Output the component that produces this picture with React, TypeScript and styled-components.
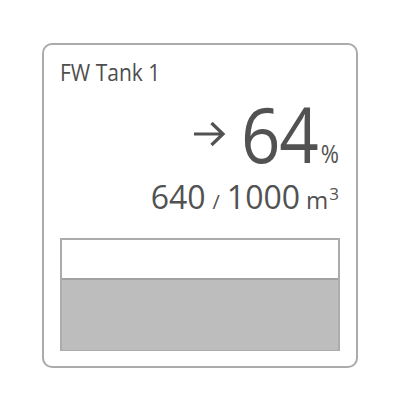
import styled, { createGlobalStyle } from 'styled-components';

const Global = createGlobalStyle`
  html, body {
    margin: 0;
    padding: 0;
    background: #ffffff;
  }
  body {
    font-family: "Open Sans", "Noto Sans", sans-serif;
    color: #525252;
  }
`;

const Page = styled.div`
  width: 400px;
  height: 410px;
  padding: 43px 42px;
  box-sizing: border-box;
`;

const Card = styled.div`
  width: 316px;
  height: 325px;
  box-sizing: border-box;
  border: 2px solid #ababab;
  border-radius: 10px;
  padding: 16px 16px 15px 16px;
  display: flex;
  flex-direction: column;
`;

const Title = styled.div`
  font-size: 21px;
  line-height: 24px;
  color: #4e4e4e;
  transform: scaleY(1.12);
  transform-origin: 50% 20px;
`;

const Level = styled.div`
  display: flex;
  justify-content: flex-end;
  align-items: center;
  margin-top: 16px;
  height: 70px;
`;

const Arrow = styled.svg`
  width: 33px;
  height: 26px;
  margin-right: 15px;
  margin-bottom: 5px;
`;

const Big = styled.span`
  font-size: 69px;
  line-height: 70px;
  letter-spacing: -1px;
  transform: scaleY(1.12);
  transform-origin: 50% 61px;
`;

const Percent = styled.span`
  font-size: 22px;
  line-height: 22px;
  align-self: flex-end;
  margin: 0 1px 6px 3px;
  transform: scaleY(1.12);
  transform-origin: 50% 100%;
`;

const Volume = styled.div`
  display: flex;
  justify-content: flex-end;
  align-items: baseline;
  margin-top: 8px;
  font-size: 32px;
  line-height: 36px;
`;

const Small = styled.span<{ $size: number; $left: number; $right: number }>`
  font-size: ${(p) => p.$size}px;
  margin: 0 ${(p) => p.$right}px 0 ${(p) => p.$left}px;
`;

const Sup = styled.sup`
  font-size: 17px;
  vertical-align: 9px;
  line-height: 0;
  margin-left: 1px;
`;

const Gauge = styled.div`
  margin-top: 18px;
  height: 118px;
  box-sizing: border-box;
  border: 2px solid #acacac;
  border-bottom-width: 1px;
  display: flex;
  flex-direction: column;
  justify-content: flex-end;
  background: #ffffff;
`;

const Fill = styled.div`
  background: #bdbdbd;
  border-top: 2px solid #a2a2a2;
`;

export default function App() {
  const level = 64;
  return (
    <Page>
      <Global />
      <Card>
        <Title>FW Tank 1</Title>
        <Level>
          <Arrow viewBox="0 0 33 26">
            <path d="M1 13 H30 M18.5 2 L30 13 L18.5 24" fill="none" stroke="#525252" strokeWidth="3.2" />
          </Arrow>
          <Big>{level}</Big>
          <Percent>%</Percent>
        </Level>
        <Volume>
          <span>640</span>
          <Small $size={20} $left={7} $right={7}>/</Small>
          <span>1000</span>
          <Small $size={24} $left={6} $right={1}>
            m<Sup>3</Sup>
          </Small>
        </Volume>
        <Gauge>
          <Fill style={{ height: `${level}%` }} />
        </Gauge>
      </Card>
    </Page>
  );
}
